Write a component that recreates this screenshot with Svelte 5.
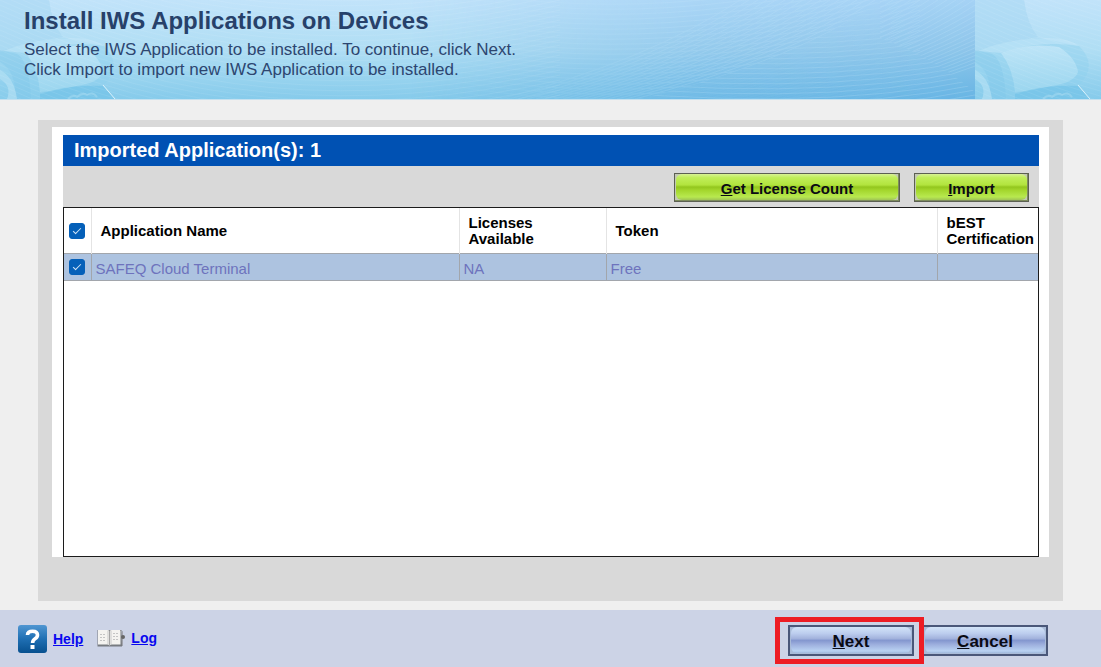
<script>
    let applications = $state([
        { name: "SAFEQ Cloud Terminal", licenses: "NA", token: "Free", best: "", selected: true }
    ]);

    let allSelected = $derived(applications.every((app) => app.selected));

    const toggleAll = (event) => {
        const checked = event.target.checked;
        applications.forEach((app) => (app.selected = checked));
    };

    // Fine ripple lines for the banner
    const ripples = Array.from({ length: 42 }, (_, i) => i);
</script>

<div class="wizard">
    <header>
        <svg class="backdrop" viewBox="0 0 1101 99" preserveAspectRatio="none" aria-hidden="true">
            <defs>
                <linearGradient id="base" x1="0" y1="0" x2="0" y2="1">
                    <stop offset="0" stop-color="#c1e3fa" />
                    <stop offset="0.5" stop-color="#b0def4" />
                    <stop offset="1" stop-color="#86cbeb" />
                </linearGradient>
                <linearGradient id="deep" x1="0" y1="0" x2="0" y2="1">
                    <stop offset="0" stop-color="#a5d2f5" />
                    <stop offset="0.5" stop-color="#8dc5ea" />
                    <stop offset="1" stop-color="#68b5e4" />
                </linearGradient>
                <linearGradient id="fade" x1="0" y1="0" x2="1" y2="0">
                    <stop offset="0.42" stop-color="#000" />
                    <stop offset="0.72" stop-color="#ccc" />
                    <stop offset="1" stop-color="#fff" />
                </linearGradient>
                <linearGradient id="cup" x1="0" y1="0" x2="0" y2="1">
                    <stop offset="0" stop-color="#bde4f7" />
                    <stop offset="1" stop-color="#9bd6ef" />
                </linearGradient>
                <mask id="fadeMask">
                    <rect width="975" height="99" fill="url(#fade)" />
                </mask>
                <clipPath id="low"><path d="M640 99 Q800 60 880 0 V38 Q930 55 975 92 V99 Z" /></clipPath>
                <clipPath id="tileClip"><rect width="975" height="99" /></clipPath>
                <g id="tile" clip-path="url(#tileClip)">
                    <rect width="975" height="99" fill="url(#base)" />
                    <path d="M0 0 H49 Q52 24 63 37 Q25 42 0 52 Z" fill="#a3d6f1" opacity="0.5" />
                    <path d="M0 52 Q30 40 66 38 L104 46 Q124 66 103 86 L115 99 H0 Z" fill="#8ccfed" opacity="0.4" />
                    <path d="M3 51 Q32 39 70 38 Q92 37 104 46 Q64 40 26 53 Z" fill="#c6e8f9" opacity="0.5" />
                    <path d="M17 54 Q29 60 31 99 H15 Q17 72 0 62 V50 Z" fill="#79c5e9" opacity="0.3" />
                    <path d="M26 53 Q52 42 84 47 Q101 58 103 72 Q99 83 76 86 Q58 91 40 92 Q38 68 26 53 Z" fill="url(#cup)" />
                    <path d="M0 70 Q14 77 17 99 H7 Q12 86 0 79 Z" fill="#b2e0f4" opacity="0.7" />
                    <path d="M40 94 Q70 84 103 86 L115 99 H40 Z" fill="#70c1e7" opacity="0.6" />
                    <path d="M68 99 q5 -5 9 -2 q5 -5 10 -2 q6 -4 10 2" fill="none" stroke="#aadcf2" stroke-width="2" opacity="0.5" />
                    <path d="M103 85 L115 99" stroke="#d9f1fb" stroke-width="1" />
                    <g mask="url(#fadeMask)">
                        <rect width="975" height="99" fill="url(#deep)" />
                        <g fill="none" stroke="#c5e6fa" stroke-width="1" opacity="0.22">
                            {#each ripples as i}
                                <path d="M420 {i * 5 - 70} Q670 {i * 5 - 20} 920 {i * 5 - 100}" />
                                <path d="M{500 + i * 9} 99 Q{650 + i * 9} 60 {740 + i * 9} 0" />
                            {/each}
                        </g>
                        <g clip-path="url(#low)">
                            <rect x="540" width="435" height="99" fill="url(#deep)" opacity="0.8" />
                            <g fill="none" stroke="#b2dbf4" stroke-width="1" opacity="0.3">
                                {#each ripples as i}
                                    <path d="M540 {i * 5 - 20} Q800 {i * 5 + 10} 975 {i * 5 - 25}" />
                                {/each}
                            </g>
                        </g>
                    </g>
                    <g fill="none" stroke="#fff" opacity="0.07">
                        {#each ripples as i}
                            <path d="M0 {i * 5 - 90} Q260 {i * 5 + 30} 560 {i * 5 - 40}" />
                        {/each}
                    </g>
                </g>
            </defs>
            <use href="#tile" />
            <use href="#tile" x="975" />
        </svg>
        <div class="intro">
            <h1>Install IWS Applications on Devices</h1>
            <p>Select the IWS Application to be installed. To continue, click Next.</p>
            <p>Click Import to import new IWS Application to be installed.</p>
        </div>
    </header>

    <main>
        <div class="frame">
            <section class="panel">
                <h2>Imported Application(s): {applications.length}</h2>
                <div class="toolbar">
                    <button class="green license"><u>G</u>et License Count</button>
                    <button class="green import"><u>I</u>mport</button>
                </div>
                <div class="list">
                    <table>
                        <colgroup>
                            <col class="col-check" />
                            <col class="col-name" />
                            <col class="col-licenses" />
                            <col />
                            <col class="col-best" />
                        </colgroup>
                        <thead>
                            <tr>
                                <th class="check">
                                    <input type="checkbox" aria-label="Select all applications" checked={allSelected} onchange={toggleAll} />
                                </th>
                                <th>Application Name</th>
                                <th class="licenses">Licenses Available</th>
                                <th>Token</th>
                                <th>bEST Certification</th>
                            </tr>
                        </thead>
                        <tbody>
                            {#each applications as app}
                                <tr>
                                    <td class="check">
                                        <input type="checkbox" aria-label={app.name} bind:checked={app.selected} />
                                    </td>
                                    <td>{app.name}</td>
                                    <td>{app.licenses}</td>
                                    <td>{app.token}</td>
                                    <td>{app.best}</td>
                                </tr>
                            {/each}
                        </tbody>
                    </table>
                </div>
            </section>
        </div>
    </main>

    <footer>
        <a class="help" href="#help">
            <svg width="29" height="28" viewBox="0 0 29 28" aria-hidden="true">
                <defs>
                    <linearGradient id="helpFill" x1="0" y1="0" x2="0" y2="1">
                        <stop offset="0" stop-color="#5096d2" />
                        <stop offset="0.5" stop-color="#1f6fb3" />
                        <stop offset="1" stop-color="#07508f" />
                    </linearGradient>
                </defs>
                <rect width="29" height="28" rx="3" fill="url(#helpFill)" />
                <path d="M9.500 10 Q9.500 6.200 14.500 6.200 Q19.500 6.200 19.500 10 Q19.500 12.200 17 13.700 Q14.600 15.200 14.600 18" fill="none" stroke="#fff" stroke-width="3.600" />
                <rect x="12.500" y="20" width="4" height="4" fill="#fff" />
            </svg>
            <span>Help</span>
        </a>
        <a class="log" href="#log">
            <svg width="28" height="19" viewBox="0 0 28 19" aria-hidden="true">
                <path d="M0.500 1 H24 L25 17.500 H0.500 Z" fill="#777b80" />
                <path d="M1 1 H11 L12.500 2 L14 1 H23.500 V15.500 H14 L12.500 16.500 L11 15.500 H1 Z" fill="#f4f3f0" />
                <path d="M11 1.500 V15.500 M14 1.500 V15.500" stroke="#c9c9c9" />
                <path d="M12.500 2 V16" stroke="#a4a4a4" />
                <path d="M3 5.500 H9 M3 8.500 H9 M3 11.500 H9 M16 4.500 H21 M16 7.500 H21 M16 10.500 H21" stroke="#c4c4c4" stroke-dasharray="2 1" />
                <path d="M23.500 1 L25 2.500 V17" fill="none" stroke="#777" />
                <circle cx="26" cy="8" r="2" fill="#666" />
            </svg>
            <span>Log</span>
        </a>
        <div class="actions">
            <div class="highlight">
                <button class="blue"><u>N</u>ext</button>
            </div>
            <button class="blue"><u>C</u>ancel</button>
        </div>
    </footer>
</div>

<style>
    :global(body) {
        margin: 0;
        background: #efefef;
    }

    .wizard {
        display: flex;
        flex-direction: column;
        min-height: 100vh;
        font-family: "Liberation Sans", Arial, sans-serif;
        font-size: 15px;
    }

    header {
        position: relative;
        border-bottom: 1px solid #c5e1f0;
        color: #2d4670;
    }

    .backdrop {
        position: absolute;
        inset: 0;
        width: 100%;
        height: 100%;
    }

    .intro {
        position: relative;
        padding: 7px 24px 19px;
    }

    h1 {
        margin: 0 0 5px;
        font-size: 24px;
        line-height: 28px;
        color: #27416a;
    }

    p {
        margin: 0;
        font-size: 17px;
        line-height: 20px;
    }

    main {
        flex: 1;
        display: flex;
        padding: 20px 38px 9px;
    }

    .frame {
        flex: 1;
        display: flex;
        padding: 7px 14px 44px;
        background: #d9d9d9;
    }

    .panel {
        flex: 1;
        display: flex;
        flex-direction: column;
        padding: 8px 10px 0 11px;
        background: #fff;
    }

    h2 {
        margin: 0;
        padding-left: 11px;
        font-size: 20px;
        line-height: 31px;
        color: #fff;
        background: #0051b3;
    }

    .toolbar {
        display: flex;
        justify-content: flex-end;
        gap: 14px;
        padding: 7px 10px 5px;
        background: #d9d9d9;
    }

    button {
        position: relative;
        z-index: 0;
        padding: 2px 0 0;
        font-family: inherit;
        font-weight: bold;
        color: #0a0a14;
        cursor: pointer;
    }

    /* rounded glossy face inside the square border */
    button::before {
        content: "";
        position: absolute;
        inset: 0 1px 1px;
        z-index: -1;
        border-radius: 6px;
    }

    .green {
        height: 29px;
        font-size: 15px;
        border: 1px solid #5c6052;
        background: #c3c8b4;
        box-shadow: inset -1px -1px 0 #7d8c5c;
    }

    .green::before {
        background: linear-gradient(#d8f294, #c0ee5a 14%, #b2e43e 42%, #93c61e 50%, #a3d62c 62%, #b8e94f 88%, #9fc455);
    }

    .license {
        width: 226px;
    }

    .import {
        width: 115px;
    }

    .list {
        flex: 1;
        border: 1px solid #1c1c1c;
    }

    table {
        width: 100%;
        table-layout: fixed;
        border-collapse: collapse;
    }

    .col-check {
        width: 27px;
    }

    .col-name {
        width: 368px;
    }

    .col-licenses {
        width: 147px;
    }

    .col-best {
        width: 101px;
    }

    th {
        height: 44px;
        padding: 1px 0 0 9px;
        line-height: 16px;
        font-size: 15px;
        text-align: left;
        color: #000;
        border-right: 1px solid #e4e4e4;
    }

    .licenses {
        padding-right: 40px;
    }

    td {
        height: 27px;
        padding: 3px 0 0 4px;
        line-height: 22px;
        box-sizing: border-box;
        color: #6e73bd;
        background: #adc3e0;
        border: 1px solid #a2a6ac;
    }

    td:first-child {
        border-left: none;
    }

    th:last-child,
    td:last-child {
        border-right: none;
    }

    .check {
        padding: 0 0 0 5px;
        vertical-align: middle;
    }

    input {
        display: grid;
        place-items: center;
        appearance: none;
        width: 16px;
        height: 16px;
        margin: 0;
        border: 1px solid #0560b9;
        border-radius: 3px;
        background: #fff;
    }

    input:checked {
        background: #0560b9;
    }

    input:checked::after {
        content: "";
        width: 7px;
        height: 3px;
        margin-bottom: 2px;
        border-left: 1px solid #d3e5f7;
        border-bottom: 1px solid #d3e5f7;
        transform: rotate(-45deg);
    }

    footer {
        display: flex;
        align-items: flex-start;
        padding: 15px 53px 11px 18px;
        background: #ccd3e6;
    }

    footer a {
        display: flex;
        align-items: center;
        gap: 6px;
        color: #0808f0;
        font-size: 14px;
        font-weight: bold;
        text-decoration: none;
    }

    footer a span {
        text-decoration: underline;
    }

    .log {
        height: 26px;
        margin-left: 14px;
    }

    .actions {
        display: flex;
        gap: 8px;
        margin-left: auto;
    }

    .blue {
        width: 126px;
        height: 31px;
        font-size: 17px;
        border: 2px solid #4a5779;
        background: #a9bbd8;
    }

    .blue::before {
        background: linear-gradient(#d3e4f8, #bccdee 25%, #a3b3dd 44%, #8497cf 52%, #9eb0de 68%, #b9d2f2 92%, #9fb8dc);
    }

    .highlight {
        position: relative;
    }

    /* red marker frame around the button */
    .highlight::after {
        content: "";
        position: absolute;
        inset: -8px -10px -8px -13px;
        border: 5px solid #ed1c24;
        pointer-events: none;
        z-index: 1;
    }
</style>
